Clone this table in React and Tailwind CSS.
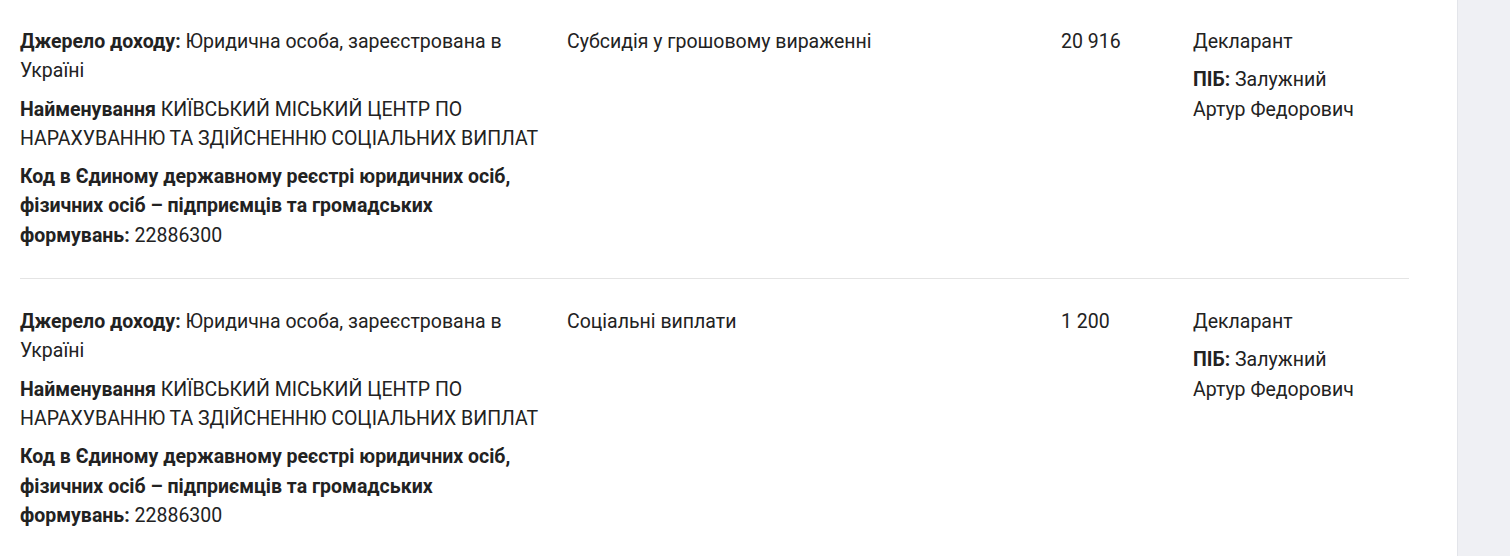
const rows = [
  { kind: "Субсидія у грошовому вираженні", amount: "20 916" },
  { kind: "Соціальні виплати", amount: "1 200" },
];

const IncomeRow = ({ kind, amount, first, last }) => (
  <div
    className={
      "grid grid-cols-[547px_494px_132px_216px] " +
      (first ? "pt-[27px] pb-[28px] " : "pt-[28px] pb-[28px] ") +
      (last ? "" : "border-b border-[#e4e4e4]")
    }
  >
    <div className="pr-[25px]">
      <p className="mb-[9px]">
        <b className="font-bold">Джерело доходу:</b> Юридична особа, зареєстрована в Україні
      </p>
      <p className="mb-[9px]">
        <b className="font-bold">Найменування</b> КИЇВСЬКИЙ МІСЬКИЙ ЦЕНТР ПО НАРАХУВАННЮ ТА ЗДІЙСНЕННЮ СОЦІАЛЬНИХ ВИПЛАТ
      </p>
      <p>
        <b className="font-bold">
          Код в Єдиному державному реєстрі юридичних осіб, фізичних осіб – підприємців та громадських формувань:
        </b>{" "}
        22886300
      </p>
    </div>
    <div className="pr-5">{kind}</div>
    <div className="pr-5">{amount}</div>
    <div className="pr-[40px]">
      <p className="mb-[9px]">Декларант</p>
      <p>
        <b className="font-bold">ПІБ:</b> Залужний Артур Федорович
      </p>
    </div>
  </div>
);

export default function App() {
  return (
    <div className="flex h-[556px] w-[1510px] overflow-hidden bg-white font-['Roboto',sans-serif] text-[19.5px] leading-[29.3px] text-[#222]">
      <main className="flex-1 pl-[20px]">
        <div className="w-[1389px]">
          {rows.map((r, i) => (
            <IncomeRow key={i} {...r} first={i === 0} last={i === rows.length - 1} />
          ))}
        </div>
      </main>
      <aside className="w-[53px] shrink-0 border-l border-[#e3e5ea] bg-[#eff0f4]" />
    </div>
  );
}
